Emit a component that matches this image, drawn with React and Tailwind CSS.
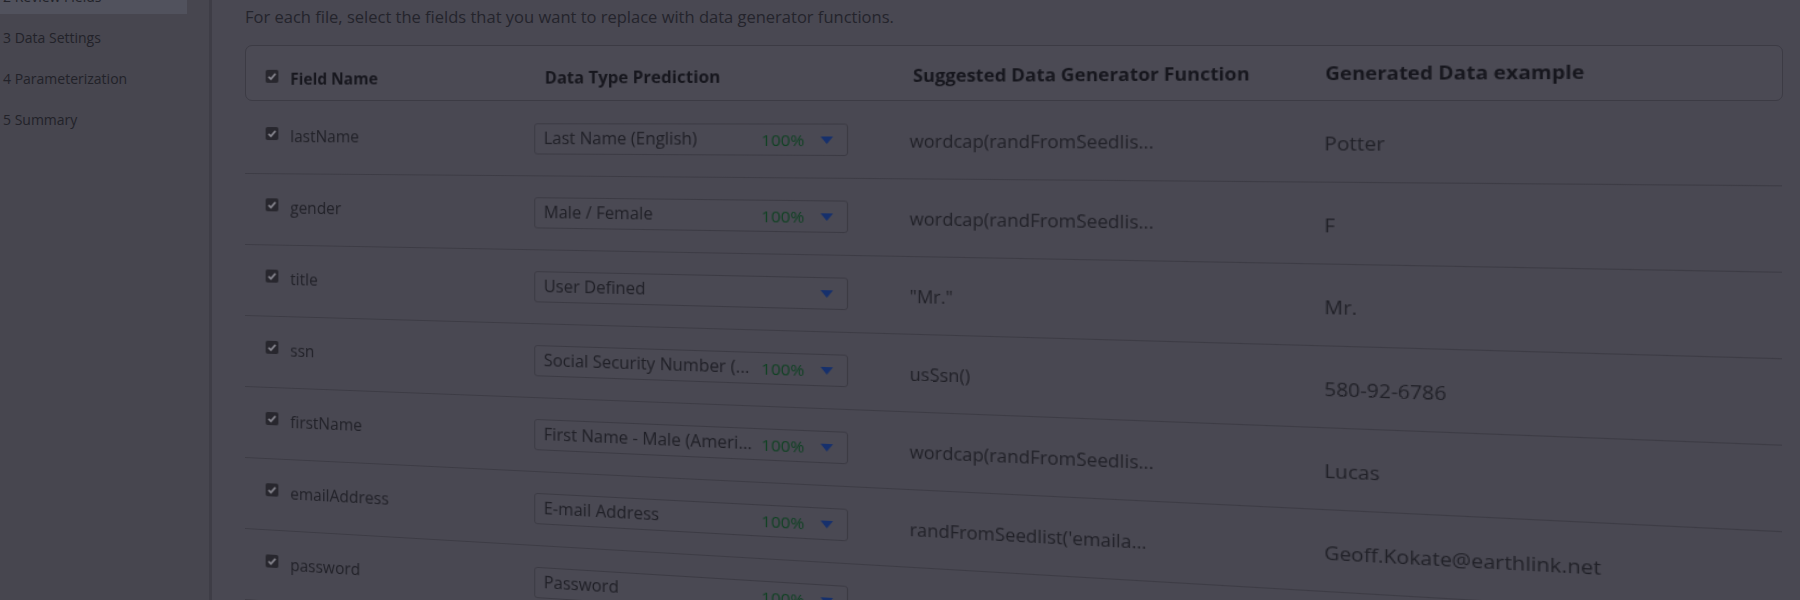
import React from 'react';

const STEPS = ['2 Review Fields', '3 Data Settings', '4 Parameterization', '5 Summary'];

const ROWS = [
  { field: 'lastName', type: 'Last Name (English)', pct: true, fn: 'wordcap(randFromSeedlis...', value: 'Potter' },
  { field: 'gender', type: 'Male / Female', pct: true, fn: 'wordcap(randFromSeedlis...', value: 'F' },
  { field: 'title', type: 'User Defined', pct: false, fn: '"Mr."', value: 'Mr.' },
  { field: 'ssn', type: 'Social Security Number (...', pct: true, fn: 'usSsn()', value: '580-92-6786' },
  { field: 'firstName', type: 'First Name - Male (Ameri...', pct: true, fn: 'wordcap(randFromSeedlis...', value: 'Lucas' },
  { field: 'emailAddress', type: 'E-mail Address', pct: true, fn: "randFromSeedlist('emaila...", value: 'Geoff.Kokate@earthlink.net' },
  { field: 'password', type: 'Password', pct: true, fn: "randFromSeedlist('passw...", value: 'Xk29pQ7w' },
];

function Check() {
  return (
    <svg width="13" height="13" viewBox="0 0 13 13" className="shrink-0">
      <rect x="0" y="0" width="13" height="13" rx="2" fill="#28272e" />
      <path d="M3 6.8 L5.4 9.2 L10 3.8" fill="none" stroke="#86858e" strokeWidth="1.8" />
    </svg>
  );
}

function Caret() {
  return (
    <svg width="11" height="7" viewBox="0 0 11 7" className="shrink-0">
      <path d="M0 0 H11 L5.5 7 Z" fill="#16306c" />
    </svg>
  );
}

function TypeSelect({ label, pct }) {
  return (
    <div className="mt-[20px] flex h-[30px] w-[284px] items-center rounded-[3px] border border-[#3b3a43] bg-[#4a4953] pl-[8px] pr-[12px]">
      <span className="min-w-0 flex-1 overflow-hidden whitespace-nowrap text-[15.5px] text-[#202027]">{label}</span>
      {pct && <span className="ml-[4px] text-[15px] text-[#114224]">100%</span>}
      <span className="ml-[14px]"><Caret /></span>
    </div>
  );
}

export default function App() {
  return (
    <div className="flex h-[600px] w-[1800px] overflow-hidden bg-[#494852] font-['Open_Sans',sans-serif]">
      {/* wizard steps */}
      <aside className="w-[212px] shrink-0 border-r-[3px] border-[#3e3d46] bg-[#47464f]">
        <ul className="-mt-[27px] w-[187px]">
          {STEPS.map((s, i) => (
            <li
              key={s}
              className={`flex h-[41px] items-center pl-[3px] pt-[5px] text-[14px] text-[#222229] ${i === 0 ? 'bg-[#51525d]' : ''}`}
            >
              {s}
            </li>
          ))}
        </ul>
      </aside>

      <main className="flex-1 pl-[33px] pt-[6px]">
        <p className="text-[16.5px] leading-[22px] text-[#24242c]">
          For each file, select the fields that you want to replace with data generator functions.
        </p>

        {/* header box stays flat, its labels and the rows are seen at an angle */}
        <div className="mt-[17px] h-[56px] w-[1538px] rounded-[7px] border border-[#3c3b44] bg-[#4b4a54]">
          <div className="grid w-[1290px] origin-[0px_71px] grid-cols-[284px_335px_338px_1fr] items-start pt-[22px] text-[15.5px] font-bold leading-[22px] text-[#16161d] [transform:perspective(1500px)_rotateY(-12deg)]">
            <div className="flex items-center gap-[12px] pl-[20px]">
              <span className="-mt-[5px]"><Check /></span>
              <span>Field Name</span>
            </div>
            <div className="pl-[9px]">Data Type Prediction</div>
            <div className="pl-[4px]">Suggested Data Generator Function</div>
            <div>Generated Data example</div>
          </div>
        </div>

        <div className="mt-[2px] w-[1290px] origin-[0px_14px] [transform:perspective(1500px)_rotateY(-12deg)]">
          {ROWS.map(r => (
            <div key={r.field} className="grid h-[71px] grid-cols-[284px_335px_338px_1fr] border-b border-[#3c3b44]">
              <div className="flex items-start gap-[12px] pl-[21px] pt-[22px]">
                <span className="mt-[2px]"><Check /></span>
                <span className="text-[15.5px] leading-[22px] text-[#202027]">{r.field}</span>
              </div>
              <div>
                <TypeSelect label={r.type} pct={r.pct} />
              </div>
              <div className="pl-[2px] pt-[25px] text-[15.5px] leading-[22px] text-[#202027]">{r.fn}</div>
              <div className="pt-[26px] text-[16px] leading-[22px] text-[#202027]">{r.value}</div>
            </div>
          ))}
        </div>
      </main>
    </div>
  );
}
